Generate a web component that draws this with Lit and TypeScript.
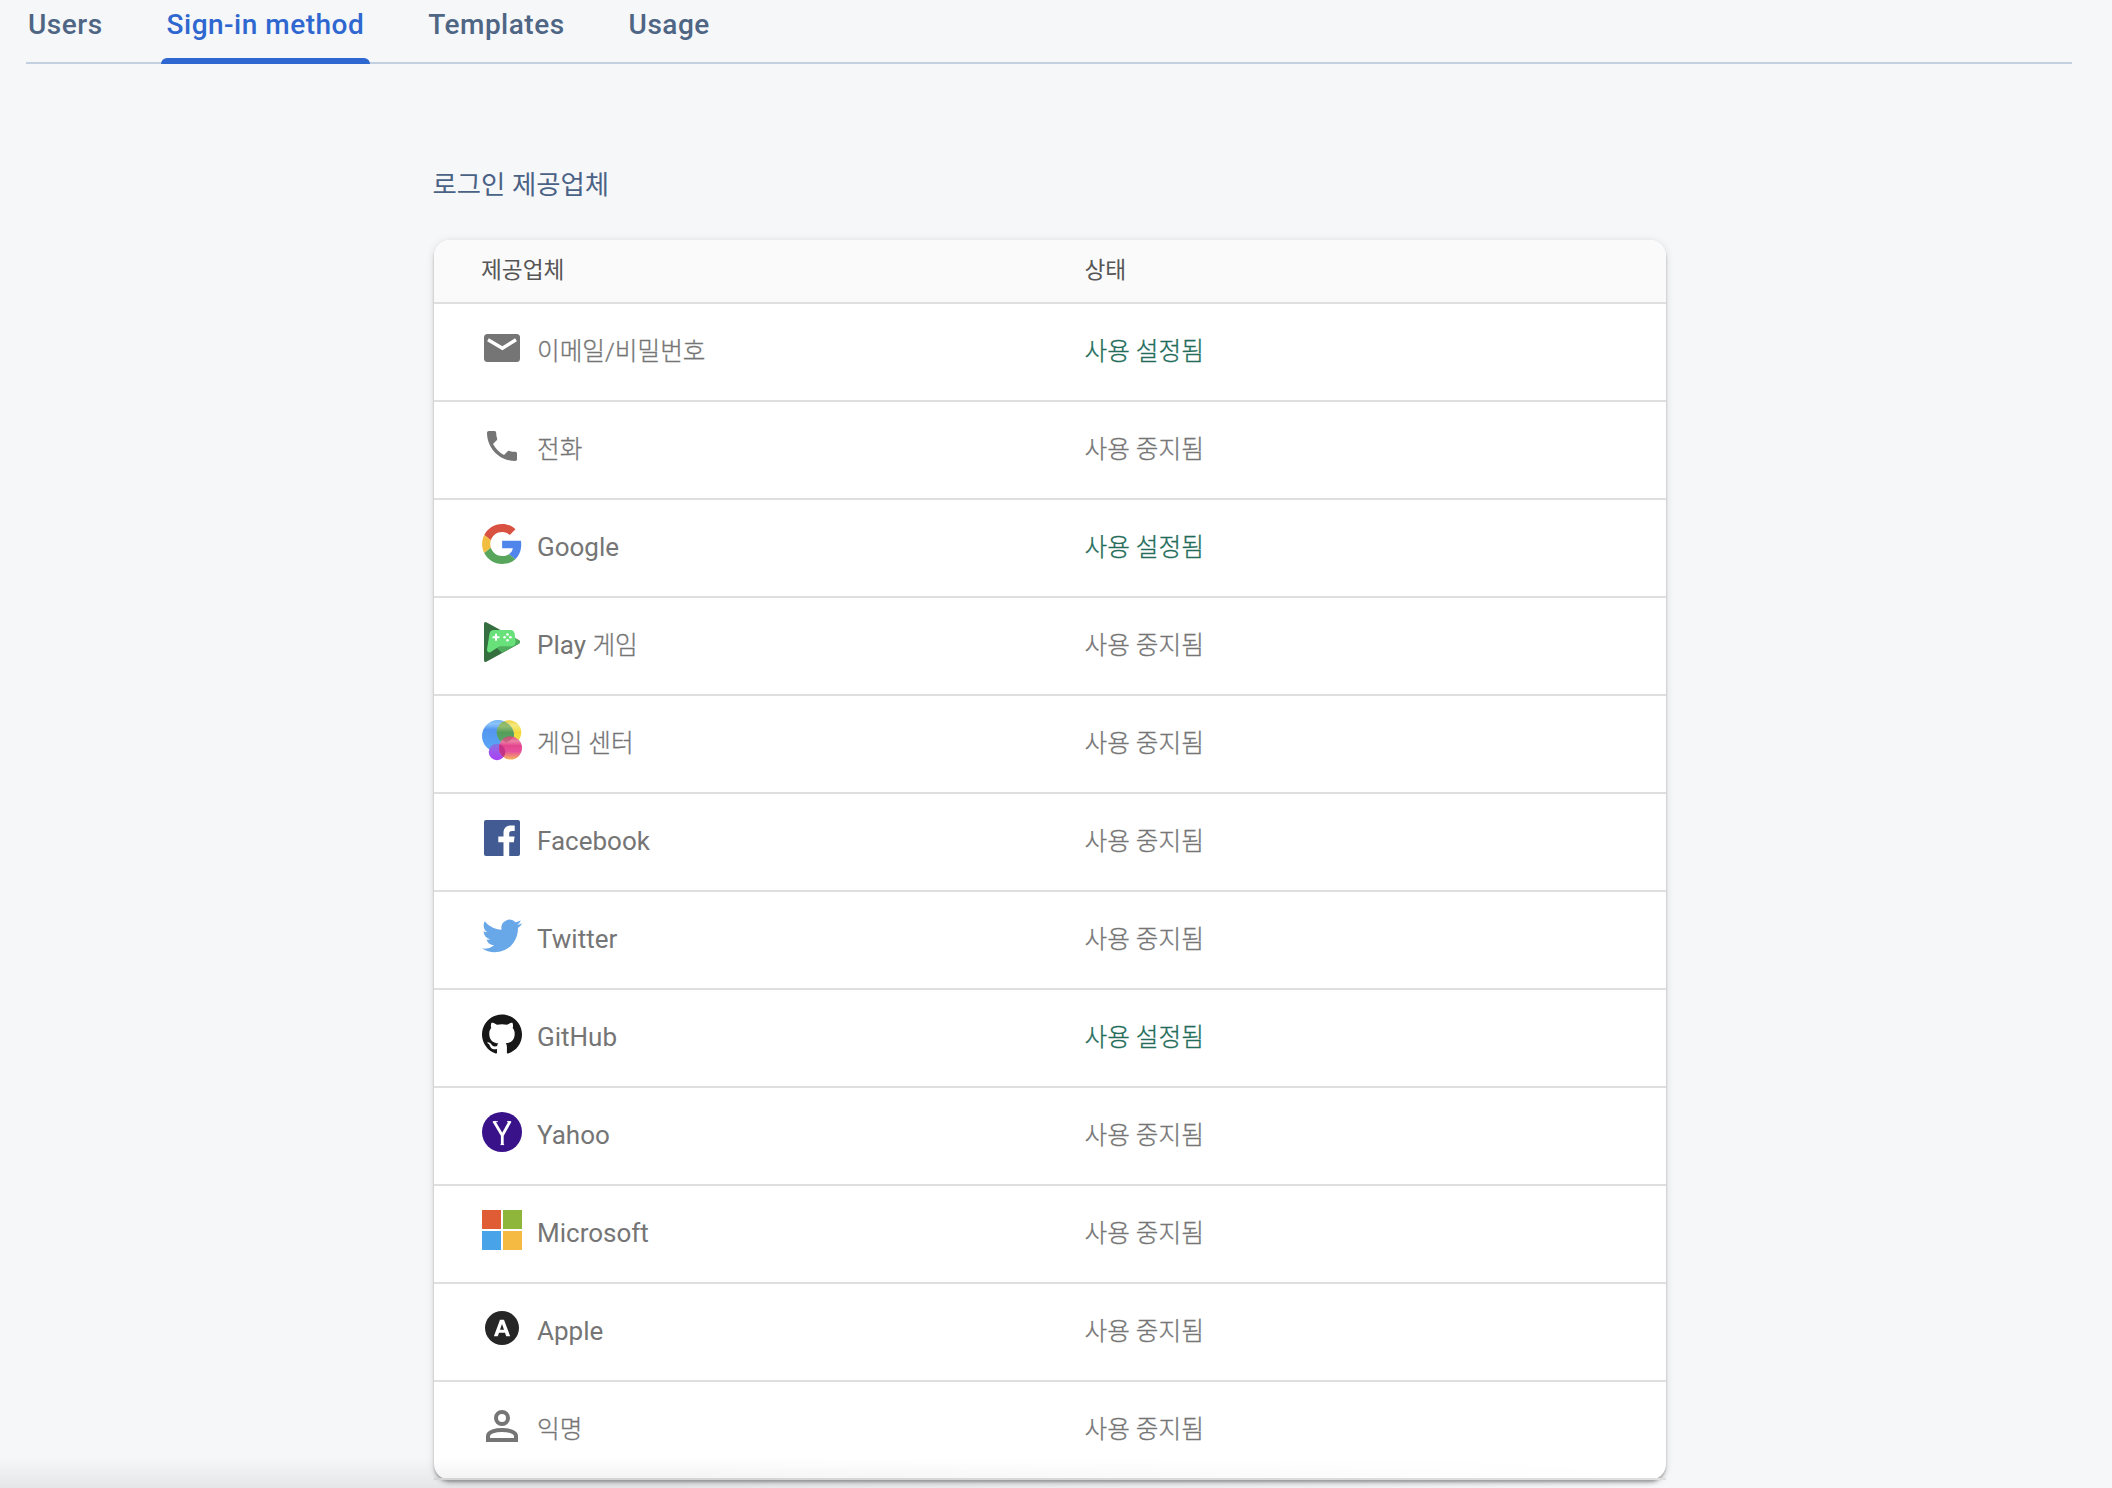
import { LitElement, html, css, svg } from "lit";
import { customElement } from "lit/decorators.js";

const icons: Record<string, unknown> = {
  mail: svg`<rect x="2" y="6" width="36" height="28" rx="3.5" fill="#757575"/><path d="M6 11.8L20.4 20.3L34 11.8" fill="none" stroke="#fff" stroke-width="3.4"/>`,
  phone: svg`<g transform="scale(1.6667)"><path fill="#757575" d="M6.62 10.79c1.44 2.83 3.76 5.14 6.59 6.59l2.2-2.2c.27-.27.67-.36 1.02-.24 1.12.37 2.33.57 3.57.57.55 0 1 .45 1 1V20c0 .55-.45 1-1 1-9.39 0-17-7.61-17-17 0-.55.45-1 1-1h3.5c.55 0 1 .45 1 1 0 1.25.2 2.45.57 3.57.11.35.03.74-.25 1.02l-2.2 2.2z"/></g>`,
  google: svg`<g transform="translate(.1 0) scale(.8333)"><path fill="#d95140" d="M24 9.5c3.54 0 6.71 1.22 9.21 3.6l6.85-6.85C35.9 2.38 30.47 0 24 0 14.62 0 6.51 5.38 2.56 13.22l7.98 6.19C12.43 13.72 17.74 9.5 24 9.5z"/><path fill="#5086ec" d="M46.98 24.55c0-1.57-.15-3.09-.38-4.55H24v9.02h12.94c-.58 2.96-2.26 5.48-4.78 7.18l7.73 6c4.51-4.18 7.09-10.36 7.09-17.65z"/><path fill="#f1be42" d="M10.53 28.59c-.48-1.45-.76-2.99-.76-4.59s.27-3.14.76-4.59l-7.98-6.19C.92 16.46 0 20.12 0 24c0 3.88.92 7.54 2.56 10.78l7.97-6.19z"/><path fill="#58a55c" d="M24 48c6.48 0 11.93-2.13 15.89-5.81l-7.73-6c-2.15 1.45-4.92 2.3-8.16 2.3-6.26 0-11.57-4.22-13.47-9.91l-7.98 6.19C6.51 42.62 14.62 48 24 48z"/></g>`,
  play: svg`<path d="M2 2Q2-1 4.8.6L37 18.3Q39 20 37 21.700L4.800 39.500Q2 41 2 38z" fill="#356e3f"/><path d="M33 16L37.400 18.500Q39 20 37.200 21.500L20 31L13 24z" fill="#4fae5e"/><path d="M12 8h16.500c2.800 0 4 1.800 4.200 4l.8 7c.3 3.200-1.500 5.200-4.100 5.200H17.500L9.200 29.800C7.300 31.200 4.800 30 5 27.500L7.400 12c.4-2.500 2-4 4.600-4z" fill="#68e17b"/><path d="M10.500 15.300h7M14 11.800v7" stroke="#fff" stroke-width="2"/><g fill="#fff"><circle cx="25.500" cy="12.500" r="1.300"/><circle cx="25.500" cy="18.200" r="1.300"/><circle cx="22.600" cy="15.300" r="1.300"/><circle cx="28.400" cy="15.300" r="1.300"/></g>`,
  gamecenter: svg`<defs><linearGradient id="b" x2="0" y2="1"><stop offset="0" stop-color="#73b3f7"/><stop offset=".12" stop-color="#8dc5f8"/><stop offset=".3" stop-color="#5496f0"/><stop offset="1" stop-color="#5ca8f8"/></linearGradient><linearGradient id="y" x2="0" y2="1"><stop offset="0" stop-color="#f3cf42"/><stop offset=".2" stop-color="#f5e980"/><stop offset=".5" stop-color="#f2da3c"/><stop offset="1" stop-color="#f5e84a"/></linearGradient><linearGradient id="g" x2="0" y2="1"><stop offset="0" stop-color="#8db652"/><stop offset=".25" stop-color="#91bd72"/><stop offset=".5" stop-color="#559d59"/><stop offset="1" stop-color="#5aa977"/></linearGradient><linearGradient id="p" x2="0" y2="1"><stop offset="0" stop-color="#df5183"/><stop offset=".2" stop-color="#eb82a5"/><stop offset=".4" stop-color="#e4458e"/><stop offset=".65" stop-color="#e7509b"/><stop offset="1" stop-color="#f7b45b"/></linearGradient><linearGradient id="v" x2="0" y2="1"><stop offset="0" stop-color="#7c78e0"/><stop offset=".4" stop-color="#9c5ce9"/><stop offset="1" stop-color="#a840f5"/></linearGradient><clipPath id="bc"><circle cx="16" cy="16" r="16"/></clipPath><clipPath id="pc"><circle cx="28.500" cy="28" r="11.500"/></clipPath></defs><circle cx="27" cy="12.500" r="12.300" fill="url(#y)"/><circle cx="16" cy="16" r="16" fill="url(#b)"/><circle cx="27" cy="12.500" r="12.300" fill="url(#g)" clip-path="url(#bc)"/><circle cx="15" cy="32" r="8.300" fill="url(#v)"/><circle cx="28.500" cy="28" r="11.500" fill="url(#p)"/><circle cx="15" cy="32" r="8.300" fill="#c43287" clip-path="url(#pc)"/><path d="M20 20Q25 25.500 31 17Q24 14.500 20 20z" fill="#b5506b" opacity=".6"/>`,
  facebook: svg`<rect x="2" y="2" width="36" height="36" rx="2" fill="#425b93"/><path d="M21.500 38V24.300H16.300V18.500H21.500V15c0-5 3-7.600 7.500-7.600 1.800 0 3.200.1 3.700.2v5.400h-2.600c-2.200 0-2.900 1-2.900 2.600v2.900h5.400l-.8 5.800h-4.600V38z" fill="#fff"/>`,
  twitter: svg`<g transform="scale(1.6667)"><path fill="#68a8e8" d="M23.953 4.570a10 10 0 01-2.825.775 4.958 4.958 0 002.163-2.723c-.951.555-2.005.959-3.127 1.184a4.920 4.920 0 00-8.384 4.482C7.690 8.095 4.067 6.130 1.640 3.162a4.822 4.822 0 00-.666 2.475c0 1.710.870 3.213 2.188 4.096a4.904 4.904 0 01-2.228-.616v.060a4.923 4.923 0 003.946 4.827 4.996 4.996 0 01-2.212.085 4.936 4.936 0 004.604 3.417 9.867 9.867 0 01-6.102 2.105c-.390 0-.779-.023-1.170-.067a13.995 13.995 0 007.557 2.209c9.053 0 13.998-7.496 13.998-13.985 0-.210 0-.420-.015-.630A9.935 9.935 0 0024 4.590z"/></g>`,
  github: svg`<g transform="scale(1.6667)"><path fill="#181717" d="M12 .297c-6.630 0-12 5.373-12 12 0 5.303 3.438 9.800 8.205 11.385.6.113.820-.258.820-.577 0-.285-.010-1.040-.015-2.040-3.338.724-4.042-1.610-4.042-1.610C4.422 18.070 3.633 17.700 3.633 17.700c-1.087-.744.084-.729.084-.729 1.205.084 1.838 1.236 1.838 1.236 1.070 1.835 2.809 1.305 3.495.998.108-.776.417-1.305.760-1.605-2.665-.300-5.466-1.332-5.466-5.930 0-1.310.465-2.380 1.235-3.220-.135-.303-.540-1.523.105-3.176 0 0 1.005-.322 3.300 1.230.960-.267 1.980-.399 3-.405 1.020.006 2.040.138 3 .405 2.280-1.552 3.285-1.230 3.285-1.230.645 1.653.240 2.873.120 3.176.765.840 1.230 1.910 1.230 3.220 0 4.610-2.805 5.625-5.475 5.920.420.360.810 1.096.810 2.220 0 1.606-.015 2.896-.015 3.286 0 .315.210.690.825.570C20.565 22.092 24 17.592 24 12.297c0-6.627-5.373-12-12-12"/></g>`,
  yahoo: svg`<circle cx="20" cy="20" r="20" fill="#39128a"/><path d="M12 9.500L20.300 23.500L28 9.500M20.300 22V33" fill="none" stroke="#fff" stroke-width="2.800"/><path d="M10.800 9.700h5M25 9.700h4.200M18.500 32.600h3.600" stroke="#fff" stroke-width="1"/>`,
  microsoft: svg`<path fill="#e05c35" d="M0 0h19v19H0z"/><path fill="#8db63a" d="M21 0h19v19H21z"/><path fill="#48a3e8" d="M0 21h19v19H0z"/><path fill="#f4ba42" d="M21 21h19v19H21z"/>`,
  apple: svg`<circle cx="20" cy="20" r="17" fill="#262626"/><path fill="#fff" fill-rule="evenodd" d="M18 11.700h4L28.200 28.300H24.200L23 24.800H17L15.800 28.300H11.900zM20 16L18 21.800h4z"/>`,
  person: svg`<g fill="none" stroke="#757575" stroke-width="4"><circle cx="20" cy="12" r="6"/><path d="M6 34V30C6 25.500 14 24 20 24S34 25.500 34 30V34z"/></g>`,
};

const providers: [icon: string, latin: string, korean: string, enabled: boolean][] = [
  ["mail", "", "이메일/비밀번호", true],
  ["phone", "", "전화", false],
  ["google", "Google", "", true],
  ["play", "Play ", "게임", false],
  ["gamecenter", "", "게임 센터", false],
  ["facebook", "Facebook", "", false],
  ["twitter", "Twitter", "", false],
  ["github", "GitHub", "", true],
  ["yahoo", "Yahoo", "", false],
  ["microsoft", "Microsoft", "", false],
  ["apple", "Apple", "", false],
  ["person", "", "익명", false],
];

@customElement("app-root")
export class AppRoot extends LitElement {
  static styles = css`
    :host { display: block; height: 1488px; overflow: hidden; box-sizing: border-box; background: #f6f7f9; font-family: Roboto, "Noto Sans CJK KR", sans-serif; position: relative; }
    .tabs { display: flex; margin: 0 40px 0 26px; height: 64px; box-sizing: border-box; border-bottom: 2px solid #c3d0df; }
    .tab { display: flex; flex-direction: column; justify-content: space-between; box-sizing: border-box; height: 64px; padding: 8px 6px 0; margin-right: 52px; font-size: 28px; line-height: 33px; font-weight: 500; letter-spacing: .5px; color: #4e6584; white-space: nowrap; }
    .tab:first-child { padding-left: 2px; }
    .active { color: #2f67d0; }
    .active::after { content: ""; height: 6px; margin: 0 -6px; border-radius: 6px 6px 0 0; background: #2f67d0; }
    .page { width: 1232px; margin: 0 0 0 434px; }
    h2 { margin: 0 0 0 -1.5px; padding-top: 97px; height: 79px; font-size: 26.4px; line-height: 48px; font-weight: 400; color: #4a6285; }
    .card { border-radius: 16px; background: #fff; box-shadow: 0 4px 4px -1px rgba(0,0,0,.2), 0 1px 8px rgba(0,0,0,.12), 0 2px 2px rgba(0,0,0,.14); }
    .row { display: grid; grid-template-columns: 602.5px 1fr; padding-left: 48px; height: 98px; box-sizing: border-box; border-bottom: 2px solid #dfdfdf; color: #757575; font-size: 26px; line-height: 36px; }
    .row.head { height: 64px; border-radius: 16px 16px 0 0; background: #fafafa; color: #565656; font-size: 22.7px; padding: 13px 0 0 47px; grid-template-columns: 603.5px 1fr; }
    .name { display: flex; gap: 15px; }
    .icon { width: 40px; height: 40px; margin-top: 24px; flex: none; overflow: visible; }
    .label { padding-top: 29px; white-space: nowrap; }
    .ko { font-size: 24.65px; font-weight: 300; -webkit-text-stroke: .3px currentColor; }
    .on { color: #236c5a; }
    .fade { position: absolute; left: 0; bottom: 0; width: 1650px; height: 30px; pointer-events: none; background: linear-gradient(transparent, rgba(0,0,0,.065)); -webkit-mask-image: linear-gradient(90deg, #000 40%, transparent); mask-image: linear-gradient(90deg, #000 40%, transparent); }
  `;
  render() {
    return html`
      <nav class="tabs">
        <div class="tab">Users</div><div class="tab active">Sign-in method</div><div class="tab">Templates</div><div class="tab">Usage</div>
      </nav>
      <main class="page">
        <h2>로그인 제공업체</h2>
        <section class="card">
          <div class="row head"><div>제공업체</div><div>상태</div></div>
          ${providers.map(([icon, latin, korean, on]) => html`<div class="row">
            <div class="name"><svg class="icon" viewBox="0 0 40 40">${icons[icon]}</svg><span class="label">${latin}${korean ? html`<span class="ko">${korean}</span>` : ""}</span></div>
            <div class="label ${on ? "on" : ""}"><span class="ko">${on ? "사용 설정됨" : "사용 중지됨"}</span></div>
          </div>`)}
        </section>
      </main>
      <div class="fade"></div>`;
  }
}
